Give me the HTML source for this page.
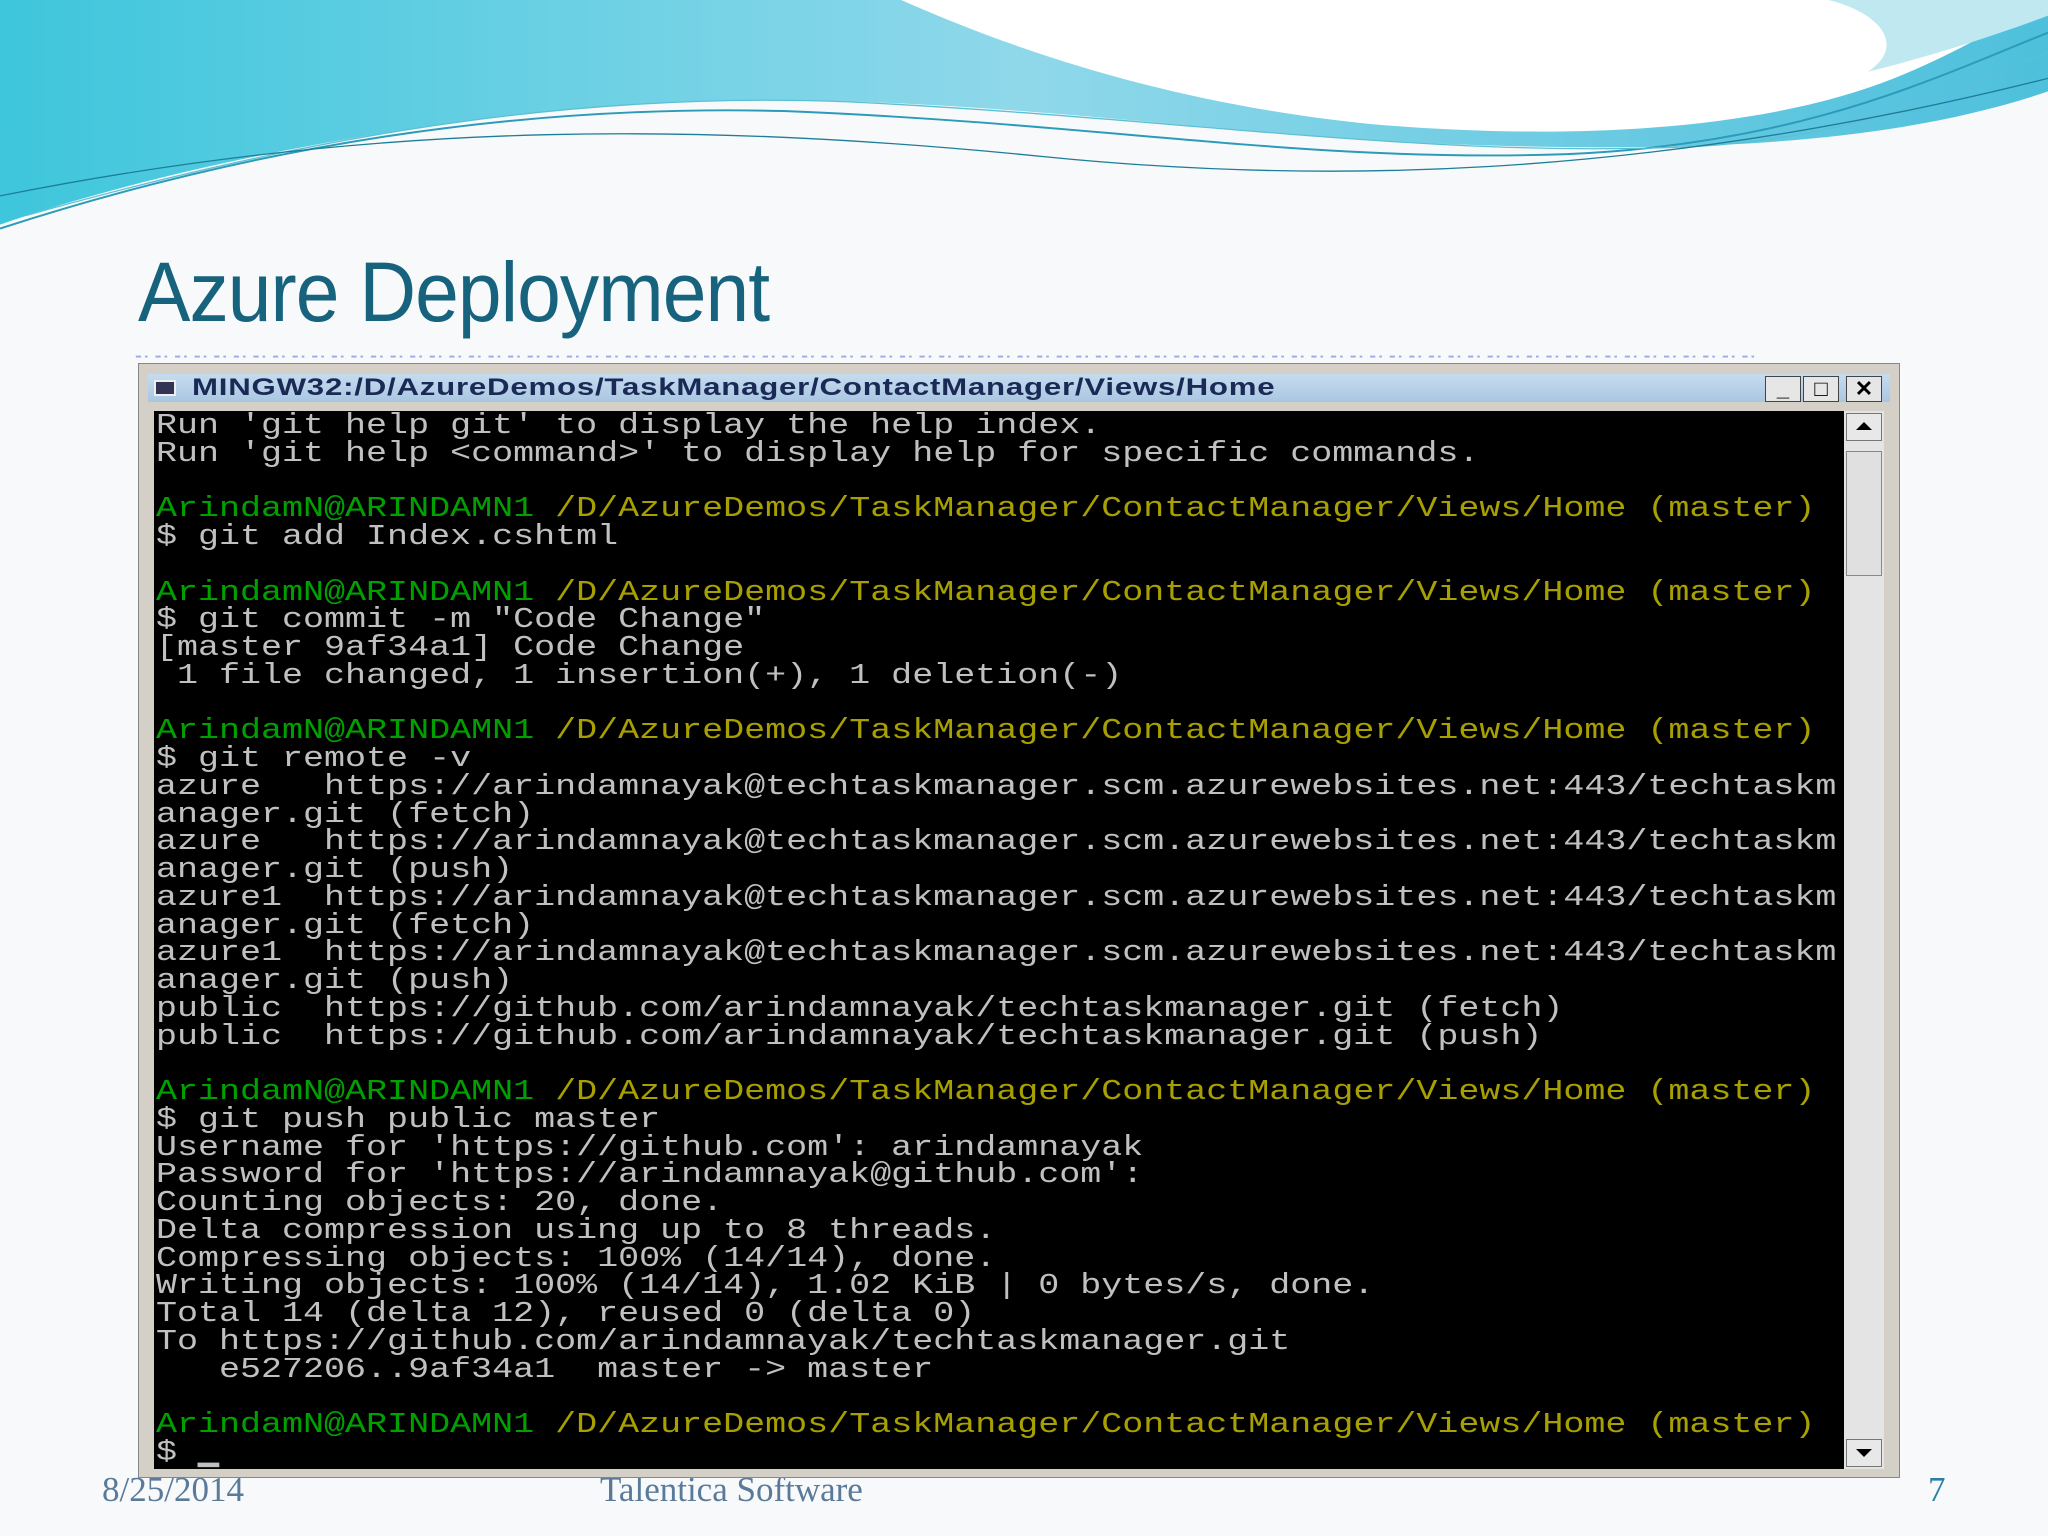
<!DOCTYPE html>
<html><head><meta charset="utf-8"><style>
html,body{margin:0;padding:0}
body{width:2048px;height:1536px;position:relative;overflow:hidden;background:#f7f9fa;font-family:"Liberation Sans",sans-serif}
.bg{position:absolute;left:0;top:0;width:2048px;height:1536px}
h1{position:absolute;left:138px;top:244px;margin:0;font-weight:normal;font-size:84px;color:#17627c;font-family:"Liberation Sans",sans-serif;letter-spacing:-1px;transform:scaleX(0.935);transform-origin:left}
.foot{position:absolute;top:1470px;font-family:"Liberation Serif",serif;font-size:35px;color:#5a7a99}
.win{position:absolute;left:138px;top:363px;width:1762px;height:1115px;background:#d4d0c8;border:1px solid #888;box-sizing:border-box;z-index:2}
.tb{position:absolute;left:9px;top:10px;width:1742px;height:28px;background:linear-gradient(#c6dcef,#a9c6e2);}
.tb span{position:absolute;left:44px;top:0px;font-weight:bold;font-size:24px;line-height:28px;color:#1a2a55;letter-spacing:0.6px;transform:scaleX(1.3);transform-origin:left}
.ico{position:absolute;left:6px;top:6px;width:22px;height:16px;background:#335;border:2px solid #eee;box-sizing:border-box}
.btn{position:absolute;top:2px;width:36px;height:26px;background:#e6e6e6;border:1px solid #444;box-sizing:border-box;text-align:center;font-weight:bold;font-size:22px;line-height:24px;color:#000}
.con{position:absolute;left:15px;top:47px;width:1690px;height:1058px;background:#000;overflow:hidden}
pre{margin:0;position:absolute;left:2px;top:1px;font-family:"Liberation Mono",monospace;font-size:29px;line-height:27.75px;color:#c0c0c0;transform:scaleX(1.207);transform-origin:left top;white-space:pre}
.g{color:#00a000}.y{color:#a8a000}
.sb{position:absolute;left:1705px;top:47px;width:40px;height:1058px;background:#e4e4e4}
.ar{position:absolute;left:2px;width:36px;height:28px;background:#e8e8e8;border:1px solid #777;box-sizing:border-box}
.th{position:absolute;left:2px;top:40px;width:36px;height:125px;background:#e0e0e0;border:1px solid #888;box-sizing:border-box}
</style></head><body>
<svg class="bg" viewBox="0 0 1568 1176" preserveAspectRatio="none">
<defs><linearGradient id="b" x1="0" x2="1"><stop offset="0" stop-color="#3ec6dc"/><stop offset=".5" stop-color="#8fd8ea"/><stop offset="1" stop-color="#4ec0dc"/></linearGradient></defs>
<path d="M0,0 H1568 V70 C1450,110 1300,118 1100,110 C900,100 720,70 520,78 C320,88 120,130 0,172 Z" fill="url(#b)"/>
<path d="M690,0 C780,40 900,80 1050,95 C1200,108 1350,100 1450,60 C1500,40 1540,15 1568,0 Z" fill="#ffffff"/>
<path d="M1400,0 H1568 V12 C1520,30 1470,45 1430,55 C1460,35 1440,10 1400,0 Z" fill="#bfe8f0"/>
<path d="M0,175 C200,110 400,80 600,85 C850,95 1000,125 1200,118 C1380,110 1480,60 1568,25" fill="none" stroke="#2a9bb8" stroke-width="1.5"/>
<path d="M20,165 C250,100 450,70 650,78 C900,90 1100,122 1300,112 C1420,105 1500,70 1568,40" fill="none" stroke="#5cc0d4" stroke-width="1"/>
<path d="M0,150 C300,90 550,95 800,120 C1000,140 1250,140 1568,60" fill="none" stroke="#1e7d99" stroke-width="1"/>
<path d="M104,273 H1345" stroke="#7788dd" stroke-width="1.5" stroke-dasharray="4 3 2 6" opacity=".7"/>
</svg>
<h1>Azure Deployment</h1>
<div class="foot" style="left:102px">8/25/2014</div>
<div class="foot" style="left:600px">Talentica Software</div>
<div class="foot" style="left:1928px;color:#2a7fa8">7</div>
<div class="win">
 <div class="tb"><div class="ico"></div><span>MINGW32:/D/AzureDemos/TaskManager/ContactManager/Views/Home</span>
  <div class="btn" style="left:1617px">_</div><div class="btn" style="left:1655px">□</div><div class="btn" style="left:1698px">✕</div></div>
 <div class="con"><pre>Run 'git help git' to display the help index.
Run 'git help &lt;command&gt;' to display help for specific commands.

<span class="g">ArindamN@ARINDAMN1</span> <span class="y">/D/AzureDemos/TaskManager/ContactManager/Views/Home (master)</span>
$ git add Index.cshtml

<span class="g">ArindamN@ARINDAMN1</span> <span class="y">/D/AzureDemos/TaskManager/ContactManager/Views/Home (master)</span>
$ git commit -m "Code Change"
[master 9af34a1] Code Change
 1 file changed, 1 insertion(+), 1 deletion(-)

<span class="g">ArindamN@ARINDAMN1</span> <span class="y">/D/AzureDemos/TaskManager/ContactManager/Views/Home (master)</span>
$ git remote -v
azure   https://arindamnayak@techtaskmanager.scm.azurewebsites.net:443/techtaskm
anager.git (fetch)
azure   https://arindamnayak@techtaskmanager.scm.azurewebsites.net:443/techtaskm
anager.git (push)
azure1  https://arindamnayak@techtaskmanager.scm.azurewebsites.net:443/techtaskm
anager.git (fetch)
azure1  https://arindamnayak@techtaskmanager.scm.azurewebsites.net:443/techtaskm
anager.git (push)
public  https://github.com/arindamnayak/techtaskmanager.git (fetch)
public  https://github.com/arindamnayak/techtaskmanager.git (push)

<span class="g">ArindamN@ARINDAMN1</span> <span class="y">/D/AzureDemos/TaskManager/ContactManager/Views/Home (master)</span>
$ git push public master
Username for 'https://github.com': arindamnayak
Password for 'https://arindamnayak@github.com':
Counting objects: 20, done.
Delta compression using up to 8 threads.
Compressing objects: 100% (14/14), done.
Writing objects: 100% (14/14), 1.02 KiB | 0 bytes/s, done.
Total 14 (delta 12), reused 0 (delta 0)
To https://github.com/arindamnayak/techtaskmanager.git
   e527206..9af34a1  master -&gt; master

<span class="g">ArindamN@ARINDAMN1</span> <span class="y">/D/AzureDemos/TaskManager/ContactManager/Views/Home (master)</span>
$ ▁</pre></div>
 <div class="sb"><div class="ar" style="top:2px"></div><div class="th"></div><div class="ar" style="top:1028px"></div>
 <svg style="position:absolute;left:12px;top:10px" width="16" height="10"><path d="M0,9 L8,1 L16,9Z"/></svg>
 <svg style="position:absolute;left:12px;top:1037px" width="16" height="10"><path d="M0,1 L8,9 L16,1Z"/></svg></div>
</div>
</body></html>
